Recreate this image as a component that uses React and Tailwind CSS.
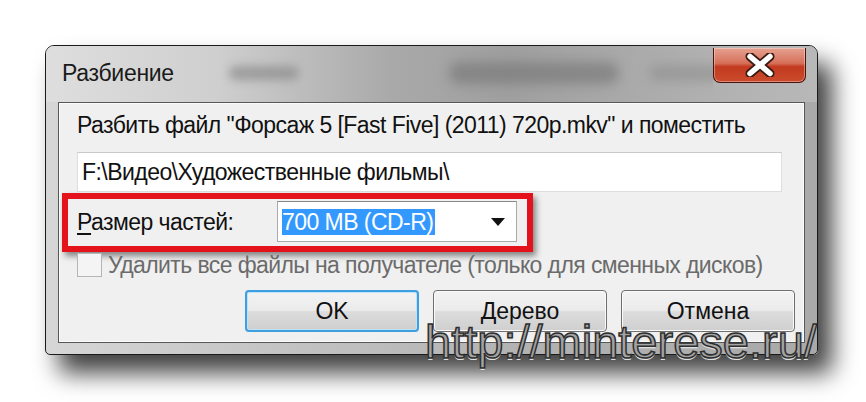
import React from "react";

const font = { fontFamily: '"Liberation Sans", Arial, sans-serif' };

const CloseButton = () => (
  <div className="mt-[2px] w-[93px] h-[35px] rounded-b-[7px] border border-[#4a130b] border-t-0 bg-[linear-gradient(180deg,#e6a190_0%,#d6705a_45%,#c23a1f_55%,#cc4b2d_100%)] shadow-[inset_0_0_0_1px_rgba(255,255,255,0.35)] flex items-center justify-center">
    <svg width="30" height="24" viewBox="0 0 30 24">
      <path d="M5 3.5 L25 20.5 M25 3.5 L5 20.5" stroke="#3a1a14" strokeWidth="9" strokeLinecap="round" />
      <path d="M5 3.5 L25 20.5 M25 3.5 L5 20.5" stroke="#ffffff" strokeWidth="5.5" strokeLinecap="round" />
    </svg>
  </div>
);

const Button = ({ children, primary }) => (
  <div
    className={
      "w-[174px] h-[42px] rounded-[4px] flex items-center justify-center text-[23px] text-[#111] bg-[linear-gradient(180deg,#f3f3f3_0%,#ebebeb_48%,#dcdcdc_52%,#cfcfcf_100%)] " +
      (primary
        ? "border-2 border-[#3d9ee0] shadow-[inset_0_0_0_1px_#bfe3fb]"
        : "border border-[#6f6f6f] shadow-[inset_0_0_0_1px_#fafafa]")
    }
  >
    {children}
  </div>
);

export default function App() {
  return (
    <div className="relative w-[866px] h-[402px] bg-white overflow-hidden pt-[45px] pl-[45px]" style={font}>
      <div className="w-[773px] h-[310px] rounded-t-[9px] rounded-b-[5px] border border-[#1a1a1a] bg-[linear-gradient(90deg,#d6d6d6_0%,#c4c4c4_30%,#b3b3b3_60%,#a9a9a9_100%)] shadow-[14px_18px_24px_rgba(0,0,0,0.75)] flex flex-col">
        <div className="h-[56px] flex overflow-hidden rounded-t-[8px] bg-[linear-gradient(90deg,#dedede_0%,#cfcfcf_22%,#a9a9a9_45%,#9f9f9f_60%,#b0b0b0_85%,#b8b8b8_100%)]">
          <div className="flex-1 min-w-0 overflow-hidden flex items-center pl-[16px] pb-[2px]">
            <span className="shrink-0 text-[23px] text-[#1a1a1a] tracking-[-0.3px]">Разбиение</span>
            <span className="shrink-0 ml-[55px] w-[70px] h-[14px] rounded-full bg-[#8a8a8a] blur-[5px] opacity-70" />
            <span className="shrink-0 ml-[150px] w-[170px] h-[22px] rounded-full bg-[#7a7a7a] blur-[6px] opacity-70" />
            <span className="shrink-0 ml-[30px] w-[110px] h-[16px] rounded-full bg-[#8c8c8c] blur-[6px] opacity-60" />
          </div>
          <div className="shrink-0 pr-[11px]">
            <CloseButton />
          </div>
        </div>

        <div className="mx-[12px] h-[241px] border border-[#575757] bg-[#f0f0f0] shadow-[inset_0_0_0_1px_#fbfbfb] pl-[18px] pt-[9px] text-[23px] text-[#111] tracking-[-0.55px]">
          <div className="leading-[26px]">
            Разбить файл "Форсаж 5 [Fast Five] (2011) 720p.mkv" и поместить
          </div>

          <div className="mt-[14px] w-[705px] h-[40px] bg-white border border-[#dedede] border-t-[#c9c9c9] flex items-center pl-[4px] leading-[26px]">
            F:\Видео\Художественные фильмы\
          </div>

          <div className="ml-[-15px] mt-[1px] w-[471px] h-[59px] border-[6px] border-[#e3121b] shadow-[3px_4px_6px_rgba(0,0,0,0.45)] flex items-center justify-between pl-[9px] pr-[10px] pb-[2px]">
            <span className="leading-[26px]">
              <span className="underline underline-offset-[3px]">Р</span>азмер частей:
            </span>
            <div className="w-[240px] h-[41px] bg-white border border-[#a9a9a9] border-t-[#8a8a8a] flex items-center justify-between pl-[4px] pr-[10px]">
              <span className="bg-[#3399ff] text-white leading-[26px] pr-[2px]">700 MB (CD-R)</span>
              <svg width="16" height="10" viewBox="0 0 16 10">
                <polygon points="1,1 15,1 8,9" fill="#111" />
              </svg>
            </div>
          </div>

          <div className="flex items-center gap-[6px] h-[25px]">
            <span className="w-[25px] h-[24px] border border-[#b5b5b5] bg-[#f4f4f4]" />
            <span className="text-[#6b6b6b] leading-[26px] tracking-[-0.6px]">
              Удалить все файлы на получателе (только для сменных дисков)
            </span>
          </div>

          <div className="mt-[13px] flex justify-end gap-[14px] pr-[9px] tracking-normal">
            <Button primary>OK</Button>
            <Button>Дерево</Button>
            <Button>Отмена</Button>
          </div>
        </div>
      </div>

      <div className="absolute left-[425px] top-[318px] text-[47px] leading-none text-[#a3a3a3] [-webkit-text-stroke:1.5px_#2e2e2e] [text-shadow:0_2px_0_#e0e0e0]">
        http://minterese.ru/
      </div>
    </div>
  );
}
